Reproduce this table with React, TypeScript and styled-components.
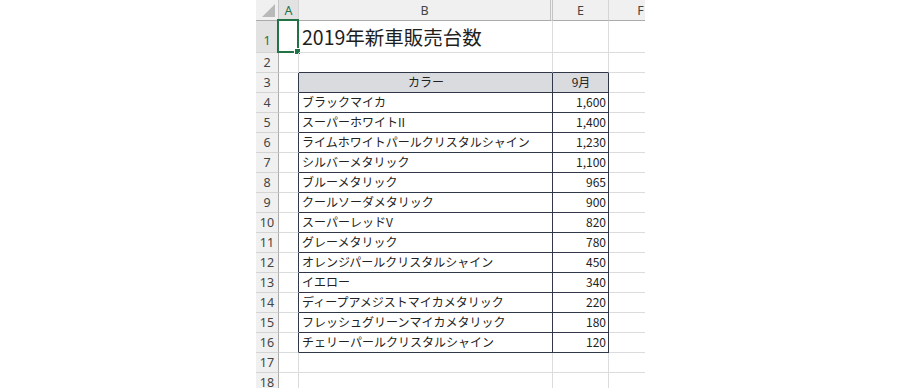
import React from "react";
import styled, { createGlobalStyle } from "styled-components";

const rows: { name: string; sales: string }[] = [
  { name: "ブラックマイカ", sales: "1,600" },
  { name: "スーパーホワイトII", sales: "1,400" },
  { name: "ライムホワイトパールクリスタルシャイン", sales: "1,230" },
  { name: "シルバーメタリック", sales: "1,100" },
  { name: "ブルーメタリック", sales: "965" },
  { name: "クールソーダメタリック", sales: "900" },
  { name: "スーパーレッドV", sales: "820" },
  { name: "グレーメタリック", sales: "780" },
  { name: "オレンジパールクリスタルシャイン", sales: "450" },
  { name: "イエロー", sales: "340" },
  { name: "ディープアメジストマイカメタリック", sales: "220" },
  { name: "フレッシュグリーンマイカメタリック", sales: "180" },
  { name: "チェリーパールクリスタルシャイン", sales: "120" },
];

const GRID = "#dadcdd";
const INK = "#2f3749";
const GREEN = "#217346";

const GlobalStyle = createGlobalStyle`
  body {
    margin: 0;
    background: #ffffff;
    font-family: "Noto Sans", "Noto Sans CJK JP", sans-serif;
  }
`;

const Page = styled.div`
  display: flex;
  width: 906px;
  height: 388px;
  padding-left: 256px;
  box-sizing: border-box;
  overflow: hidden;
`;

const Sheet = styled.div`
  width: 389px;
  height: 388px;
  overflow: hidden;
  display: grid;
  grid-template-columns: 23px 20px 254px 56px 64px;
  grid-template-rows: 21px 32px repeat(17, 20px);
  background: #ffffff;
`;

const Corner = styled.div`
  position: relative;
  background: #f0f0f0;
  border-right: 1px solid #c6c6c6;
  border-bottom: 1px solid #ababab;

  &::after {
    content: "";
    position: absolute;
    right: 3px;
    bottom: 3px;
    width: 0;
    height: 0;
    border-left: 13px solid transparent;
    border-bottom: 13px solid #b9b9b9;
  }
`;

const ColHead = styled.div<{ $active?: boolean; $hiddenAfter?: boolean }>`
  display: flex;
  align-items: center;
  justify-content: center;
  box-sizing: border-box;
  background: ${(p) => (p.$active ? "#e2e2e2" : "#f0f0f0")};
  border-right: ${(p) => (p.$hiddenAfter ? "3px double #c4c4c4" : "1px solid #d4d4d4")};
  border-bottom: 1px solid #ababab;
  font-size: 12.5px;
  color: ${(p) => (p.$active ? GREEN : "#444444")};
  padding-top: 1px;
`;

const RowHead = styled.div<{ $active?: boolean }>`
  display: flex;
  align-items: center;
  justify-content: center;
  box-sizing: border-box;
  background: ${(p) => (p.$active ? "#e2e2e2" : "#f0f0f0")};
  border-right: 1px solid #ababab;
  border-bottom: 1px solid #d4d4d4;
  font-size: 12.5px;
  color: ${(p) => (p.$active ? GREEN : "#444444")};
  padding-top: ${(p) => (p.$active ? "8px" : "0")};
`;

const Cell = styled.div<{
  $edgeRight?: boolean;
  $edgeBottom?: boolean;
  $fill?: boolean;
  $align?: "left" | "center" | "right";
}>`
  position: relative;
  display: flex;
  align-items: flex-end;
  justify-content: ${(p) =>
    p.$align === "right" ? "flex-end" : p.$align === "center" ? "center" : "flex-start"};
  box-sizing: border-box;
  padding: 0 2px 2px 3px;
  background: ${(p) => (p.$fill ? "#d9dbdf" : "transparent")};
  border-right: 1px solid ${(p) => (p.$edgeRight ? INK : GRID)};
  border-bottom: 1px solid ${(p) => (p.$edgeBottom ? INK : GRID)};
  font-family: "Noto Sans CJK JP", sans-serif;
  font-size: 12px;
  line-height: 16px;
  color: #222222;
  white-space: nowrap;
`;

const Title = styled.span`
  font-family: "Noto Sans CJK JP", sans-serif;
  font-size: 19.5px;
  line-height: 27px;
  color: #1e1e1e;
`;

const Selection = styled.div`
  position: absolute;
  left: -2px;
  top: -2px;
  right: -1px;
  bottom: -1px;
  border: 2px solid ${GREEN};

  &::after {
    content: "";
    position: absolute;
    right: -4px;
    bottom: -4px;
    width: 5px;
    height: 5px;
    background: ${GREEN};
    border: 1px solid #ffffff;
  }
`;

export default function App() {
  const tableRows = [{ name: "カラー", sales: "9月", head: true }, ...rows.map((r) => ({ ...r, head: false }))];

  return (
    <>
      <GlobalStyle />
      <Page>
        <Sheet>
          <Corner />
          <ColHead $active>A</ColHead>
          <ColHead $hiddenAfter>B</ColHead>
          <ColHead>E</ColHead>
          <ColHead>F</ColHead>

          <RowHead $active>1</RowHead>
          <Cell>
            <Selection />
          </Cell>
          <Cell>
            <Title>2019年新車販売台数</Title>
          </Cell>
          <Cell />
          <Cell />

          <RowHead>2</RowHead>
          <Cell />
          <Cell $edgeBottom />
          <Cell $edgeBottom />
          <Cell />

          {tableRows.map((r, i) => (
            <React.Fragment key={i}>
              <RowHead>{i + 3}</RowHead>
              <Cell $edgeRight />
              <Cell $edgeRight $edgeBottom $fill={r.head} $align={r.head ? "center" : "left"}>
                {r.name}
              </Cell>
              <Cell $edgeRight $edgeBottom $fill={r.head} $align={r.head ? "center" : "right"}>
                {r.sales}
              </Cell>
              <Cell />
            </React.Fragment>
          ))}

          {[17, 18].map((n) => (
            <React.Fragment key={n}>
              <RowHead>{n}</RowHead>
              <Cell />
              <Cell />
              <Cell />
              <Cell />
            </React.Fragment>
          ))}
        </Sheet>
      </Page>
    </>
  );
}
